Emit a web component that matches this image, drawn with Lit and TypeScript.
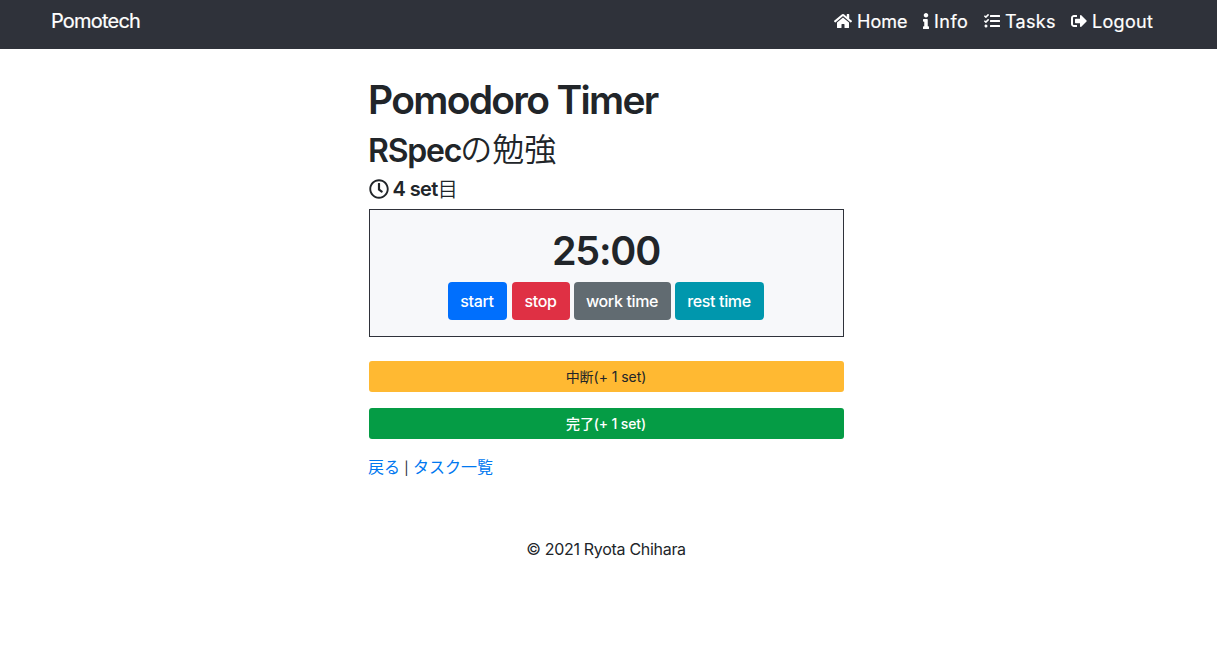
import { LitElement, html, css, svg } from "lit";
import { customElement } from "lit/decorators.js";

const icon = (w: number, d: string) => html`<svg class="icon" style="width:${w / 512}em" viewBox="0 0 ${w} 512">${svg`<path d=${d}></path>`}</svg>`;

const HOME = "M280.37 148.26L96 300.11V464a16 16 0 0 0 16 16l112.06-.29a16 16 0 0 0 15.92-16V368a16 16 0 0 1 16-16h64a16 16 0 0 1 16 16v95.64a16 16 0 0 0 16 16.05L464 480a16 16 0 0 0 16-16V300L295.67 148.26a12.19 12.19 0 0 0-15.3 0zM571.6 251.47L488 182.56V44.05a12 12 0 0 0-12-12h-56a12 12 0 0 0-12 12v72.61L318.47 43a48 48 0 0 0-61 0L4.34 251.47a12 12 0 0 0-1.6 16.9l25.5 31A12 12 0 0 0 45.15 301l235.22-193.74a12.19 12.19 0 0 1 15.3 0L530.9 301a12 12 0 0 0 16.9-1.6l25.5-31a12 12 0 0 0-1.7-16.93z";
const INFO = "M20 424.229h20V279.771H20c-11.046 0-20-8.954-20-20V212c0-11.046 8.954-20 20-20h112c11.046 0 20 8.954 20 20v212.229h20c11.046 0 20 8.954 20 20V492c0 11.046-8.954 20-20 20H20c-11.046 0-20-8.954-20-20v-47.771c0-11.046 8.954-20 20-20zM96 0C56.235 0 24 32.235 24 72s32.235 72 72 72 72-32.235 72-72S135.764 0 96 0z";
const TASKS = "M139.61 35.5a12 12 0 0 0-17 0L58.93 98.81l-22.7-22.12a12 12 0 0 0-17 0L3.53 92.41a12 12 0 0 0 0 17l47.59 47.4a12.78 12.78 0 0 0 17.61 0l15.59-15.62L156.52 69a12.09 12.09 0 0 0 .09-17zm0 159.19a12 12 0 0 0-17 0l-63.68 63.72-22.7-22.1a12 12 0 0 0-17 0L3.53 252a12 12 0 0 0 0 17L51 316.5a12.77 12.77 0 0 0 17.6 0l15.7-15.69 72.2-72.22a12 12 0 0 0 .09-16.9zM64 368c-26.49 0-48.59 21.5-48.59 48S37.53 464 64 464a48 48 0 0 0 0-96zm432 16H208a16 16 0 0 0-16 16v32a16 16 0 0 0 16 16h288a16 16 0 0 0 16-16v-32a16 16 0 0 0-16-16zm0-320H208a16 16 0 0 0-16 16v32a16 16 0 0 0 16 16h288a16 16 0 0 0 16-16V80a16 16 0 0 0-16-16zm0 160H208a16 16 0 0 0-16 16v32a16 16 0 0 0 16 16h288a16 16 0 0 0 16-16v-32a16 16 0 0 0-16-16z";
const LOGOUT = "M497 273L329 441c-15 15-41 4.5-41-17v-96H152c-13.3 0-24-10.7-24-24v-96c0-13.3 10.7-24 24-24h136V88c0-21.4 25.9-32 41-17l168 168c9.3 9.4 9.3 24.6 0 34zM192 436v-40c0-6.6-5.4-12-12-12H96c-17.7 0-32-14.3-32-32V160c0-17.7 14.3-32 32-32h84c6.6 0 12-5.4 12-12V76c0-6.6-5.4-12-12-12H96c-53 0-96 43-96 96v192c0 53 43 96 96 96h84c6.6 0 12-5.4 12-12z";
const CLOCK = "M256 8C119 8 8 119 8 256s111 248 248 248 248-111 248-248S393 8 256 8zm0 448c-110.5 0-200-89.5-200-200S145.5 56 256 56s200 89.5 200 200-89.5 200-200 200zm61.8-104.4l-84.9-61.7c-3.1-2.3-4.9-5.9-4.9-9.7V116c0-6.6 5.4-12 12-12h32c6.6 0 12 5.4 12 12v141.7l66.8 48.6c5.4 3.9 6.5 11.4 2.6 16.8L334.6 349c-3.9 5.3-11.4 6.5-16.8 2.6z";

@customElement("app-root")
export class AppRoot extends LitElement {
  static styles = css`
    :host {
      display: block;
      min-height: 666px;
      background: #fff;
      color: #212529;
      font: 400 16px/24px Inter, "Noto Sans CJK JP", sans-serif;
    }
    * { box-sizing: border-box; }
    .icon { display: block; height: 1em; fill: currentColor; flex: none; }
    .bar {
      display: flex;
      justify-content: space-between;
      height: 49px;
      padding: 6px 64px 0 51px;
      background: #2f323a;
      color: #fff;
      white-space: nowrap;
    }
    .brand { font-size: 20px; line-height: 30px; font-weight: 400; letter-spacing: -0.8px; -webkit-text-stroke: 0.2px #fff; }
    .menu { display: flex; height: 30px; }
    .item { display: flex; align-items: center; font-size: 16px; }
    .item .label { font-size: 18px; line-height: 30px; margin: 1px 0 0 5px; font-weight: 400; -webkit-text-stroke: 0.2px #fff; }
    .home { width: 89px; }
    .home .label { letter-spacing: 0; }
    .info { width: 61px; }
    .info .label { letter-spacing: 0.5px; }
    .tasks { width: 87px; }
    .tasks .label { letter-spacing: 0.3px; }
    .logout { width: 82px; }
    .logout .label { letter-spacing: 0.3px; }
    .main { width: 475px; margin-left: 369px; padding-top: 27px; }
    h1, h2, h3, p { margin: 0; font-weight: 600; white-space: nowrap; }
    h1 { font-size: 39px; line-height: 48px; letter-spacing: -1.7px; text-indent: -1px; }
    h2 { display: flex; font-size: 32px; line-height: 38px; margin-top: 8px; letter-spacing: -1.2px; text-indent: -1px; }
    h2 .jp { line-height: 31px; margin-left: 0; }
    h3 { display: flex; align-items: center; font-size: 20px; line-height: 24px; margin-top: 7px; letter-spacing: -0.6px; }
    h3 .icon { margin-left: -0.5px; }
    h3 .label { margin-left: 4px; }
    .jp { font-family: "Noto Sans CJK JP", sans-serif; font-weight: 350; letter-spacing: 0; }
    .timer {
      height: 128px;
      margin-top: 8px;
      padding-top: 17px;
      border: 1px solid #2f323a;
      background: #f7f8fa;
    }
    .time { padding-right: 1px; font-size: 39.5px; line-height: 48px; text-align: center; letter-spacing: -1.2px; }
    .buttons { display: flex; padding: 7px 0 0 78px; gap: 4px; }
    .btn {
      height: 38px;
      padding: 0 1px 0 0;
      border: 0;
      border-radius: 4px;
      color: #fff;
      font: inherit;
      font-weight: 450;
      letter-spacing: -0.35px;
      white-space: nowrap;
    }
    .start { width: 59px; margin-right: 1px; background: #006ffd; }
    .stop { width: 58px; background: #df3044; }
    .work { width: 97px; background: #616b71; }
    .rest { width: 89px; background: #0097ad; }
    .wide { display: block; width: 100%; height: 31px; border-radius: 3px; font-size: 14px; line-height: 21px; letter-spacing: -0.05px; }
    .pause { margin-top: 24px; background: #ffb932; color: #212529; font-weight: 400; }
    .done { margin-top: 16px; background: #059c45; font-weight: 500; letter-spacing: -0.15px; }
    .links { margin: 16px 0 0 -1px; font-weight: 400; letter-spacing: 0; }
    .sep { display: inline-block; width: 13px; text-align: center; font-size: 13px; line-height: 20px; }
    .link { color: #0078f0; text-decoration: none; }
    .footer { margin-top: 58px; padding-right: 1px; font-weight: 400; text-align: center; letter-spacing: -0.3px; }
  `;

  render() {
    return html`
      <header class="bar">
        <span class="brand">Pomotech</span>
        <nav class="menu">
          <span class="item home">${icon(576, HOME)}<span class="label">Home</span></span>
          <span class="item info">${icon(192, INFO)}<span class="label">Info</span></span>
          <span class="item tasks">${icon(512, TASKS)}<span class="label">Tasks</span></span>
          <span class="item logout">${icon(512, LOGOUT)}<span class="label">Logout</span></span>
        </nav>
      </header>
      <main class="main">
        <h1>Pomodoro Timer</h1>
        <h2><span>RSpec</span><span class="jp">の勉強</span></h2>
        <h3>${icon(512, CLOCK)}<span class="label">4 set</span><span class="jp">目</span></h3>
        <section class="timer">
          <p class="time">25:00</p>
          <div class="buttons">
            <button class="btn start">start</button>
            <button class="btn stop">stop</button>
            <button class="btn work">work time</button>
            <button class="btn rest">rest time</button>
          </div>
        </section>
        <button class="btn wide pause">中断(+ 1 set)</button>
        <button class="btn wide done">完了(+ 1 set)</button>
        <p class="links"><a class="link">戻る</a><span class="sep">|</span><a class="link">タスク一覧</a></p>
        <p class="footer">© 2021 Ryota Chihara</p>
      </main>
    `;
  }
}
